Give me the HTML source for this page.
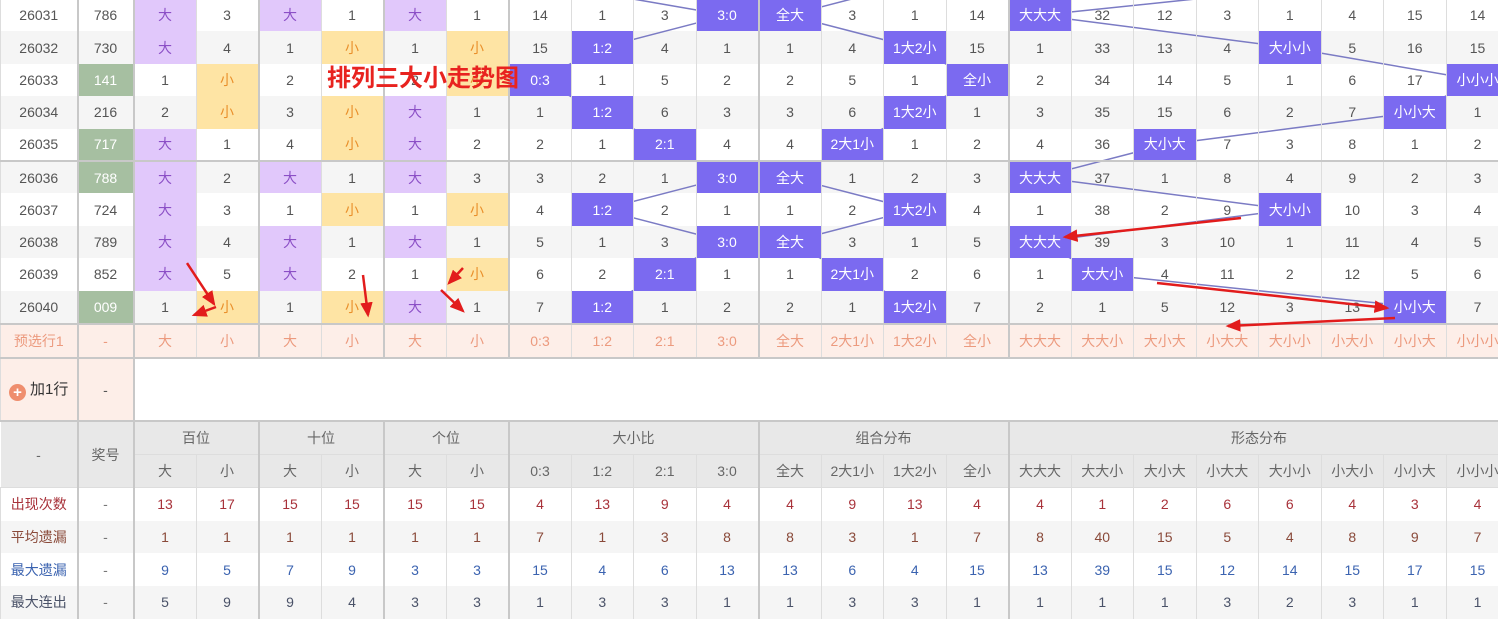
<!DOCTYPE html>
<html><head><meta charset="utf-8">
<style>
body{margin:0;width:1498px;height:621px;overflow:hidden;position:relative;background:#fff;font:14px "Liberation Sans","Noto Sans CJK SC",sans-serif;color:#555}
.zb{position:absolute;left:0;width:1498px;height:32.4px;background:#f5f5f5}
svg{position:absolute;left:0;top:0}
table{position:absolute;left:0;width:1508px;table-layout:fixed;border-collapse:collapse}
td{padding:0;text-align:center;border-left:1px solid #ddd;white-space:nowrap;overflow:hidden}
.D{top:-1px;z-index:2}
.D tr{height:32.4px}
.D td:nth-child(2),.D td:nth-child(3),.D td:nth-child(5),.D td:nth-child(7),.D td:nth-child(9),.D td:nth-child(13),.D td:nth-child(17),
.Y td:nth-child(2),.Y td:nth-child(3),.Y td:nth-child(5),.Y td:nth-child(7),.Y td:nth-child(9),.Y td:nth-child(13),.Y td:nth-child(17),
.S td:nth-child(2),.S td:nth-child(3),.S td:nth-child(5),.S td:nth-child(7),.S td:nth-child(9),.S td:nth-child(13),.S td:nth-child(17){border-left:2px solid #c8c8c8}
.D tr.sep td{border-bottom:2px solid #c8c8c8}
td.b{background:#e1c8fb;color:#8b4fc6}
td.s{background:#fee4a4;color:#e98f2a}
td.p{background:#7b6af0;color:#fff}
td.g{background:#a6bfa1;color:#fff}
.B{top:323px;z-index:2;background:#fff}
.Y td{background:#fdeee8;color:#ec9a7e;height:32px;border-top:2px solid #c8c8c8;border-bottom:2px solid #c8c8c8}
.A td{height:61px}
.A td.pk{background:#fdeee8;color:#555}
.H td{background:#e8e8e8;color:#666;border-left:2px solid #c8c8c8}
.H td.tn{border-left:1px solid #ddd}
.H1 td{height:32px;border-bottom:1px solid #ddd}
.H2 td{height:32px;border-bottom:1px solid #ddd}
.S td{height:32.7px}
.S tr:nth-child(even) td{background:#f5f5f5}
.r1 td{color:#a8323a}.r2 td{color:#8a4a3a}.r3 td{color:#3b63b0}.r4 td{color:#4a5268}
td.dash{color:#777!important}
.title{position:absolute;left:327px;top:63px;z-index:3;font:bold 24px "Liberation Sans","Noto Sans CJK SC",sans-serif;color:#e8231f;line-height:32px}
.plus{display:inline-block;width:17px;height:17px;border-radius:50%;background:#ef8e6e;color:#fff;font:bold 15px/17px "Liberation Sans",sans-serif;text-align:center;vertical-align:-3px;margin-right:4px}
</style></head><body>
<div class="zb" style="top:31.4px"></div>
<div class="zb" style="top:96.2px"></div>
<div class="zb" style="top:161px"></div>
<div class="zb" style="top:225.8px"></div>
<div class="zb" style="top:290.6px"></div>

<svg width="1498" height="330" style="z-index:1" fill="none" stroke="#7b7bc4" stroke-width="1.5">
<polyline points="539.25,-17.2 726.75,15.2 601.75,47.6 539.25,80 601.75,112.4 664.25,144.8 726.75,177.2 601.75,209.6 726.75,242 664.25,274.4 601.75,306.8"/>
<polyline points="914.25,-17.2 789.25,15.2 914.25,47.6 976.75,80 914.25,112.4 851.75,144.8 789.25,177.2 914.25,209.6 789.25,242 851.75,274.4 914.25,306.8"/>
<polyline points="1351.75,-17.2 1039.25,15.2 1289.25,47.6 1476.75,80 1414.25,112.4 1164.25,144.8 1039.25,177.2 1289.25,209.6 1039.25,242 1101.75,274.4 1414.25,306.8"/>
</svg>

<table class="D">
<colgroup><col style="width:77px"><col style="width:56px"><col span="22" style="width:62.5px"></colgroup>
<tr><td>26031</td><td>786</td><td class="b">大</td><td>3</td><td class="b">大</td><td>1</td><td class="b">大</td><td>1</td><td>14</td><td>1</td><td>3</td><td class="p">3:0</td><td class="p">全大</td><td>3</td><td>1</td><td>14</td><td class="p">大大大</td><td>32</td><td>12</td><td>3</td><td>1</td><td>4</td><td>15</td><td>14</td></tr>
<tr><td>26032</td><td>730</td><td class="b">大</td><td>4</td><td>1</td><td class="s">小</td><td>1</td><td class="s">小</td><td>15</td><td class="p">1:2</td><td>4</td><td>1</td><td>1</td><td>4</td><td class="p">1大2小</td><td>15</td><td>1</td><td>33</td><td>13</td><td>4</td><td class="p">大小小</td><td>5</td><td>16</td><td>15</td></tr>
<tr><td>26033</td><td class="g">141</td><td>1</td><td class="s">小</td><td>2</td><td></td><td>2</td><td class="s">小</td><td class="p">0:3</td><td>1</td><td>5</td><td>2</td><td>2</td><td>5</td><td>1</td><td class="p">全小</td><td>2</td><td>34</td><td>14</td><td>5</td><td>1</td><td>6</td><td>17</td><td class="p">小小小</td></tr>
<tr><td>26034</td><td>216</td><td>2</td><td class="s">小</td><td>3</td><td class="s">小</td><td class="b">大</td><td>1</td><td>1</td><td class="p">1:2</td><td>6</td><td>3</td><td>3</td><td>6</td><td class="p">1大2小</td><td>1</td><td>3</td><td>35</td><td>15</td><td>6</td><td>2</td><td>7</td><td class="p">小小大</td><td>1</td></tr>
<tr class="sep"><td>26035</td><td class="g">717</td><td class="b">大</td><td>1</td><td>4</td><td class="s">小</td><td class="b">大</td><td>2</td><td>2</td><td>1</td><td class="p">2:1</td><td>4</td><td>4</td><td class="p">2大1小</td><td>1</td><td>2</td><td>4</td><td>36</td><td class="p">大小大</td><td>7</td><td>3</td><td>8</td><td>1</td><td>2</td></tr>
<tr><td>26036</td><td class="g">788</td><td class="b">大</td><td>2</td><td class="b">大</td><td>1</td><td class="b">大</td><td>3</td><td>3</td><td>2</td><td>1</td><td class="p">3:0</td><td class="p">全大</td><td>1</td><td>2</td><td>3</td><td class="p">大大大</td><td>37</td><td>1</td><td>8</td><td>4</td><td>9</td><td>2</td><td>3</td></tr>
<tr><td>26037</td><td>724</td><td class="b">大</td><td>3</td><td>1</td><td class="s">小</td><td>1</td><td class="s">小</td><td>4</td><td class="p">1:2</td><td>2</td><td>1</td><td>1</td><td>2</td><td class="p">1大2小</td><td>4</td><td>1</td><td>38</td><td>2</td><td>9</td><td class="p">大小小</td><td>10</td><td>3</td><td>4</td></tr>
<tr><td>26038</td><td>789</td><td class="b">大</td><td>4</td><td class="b">大</td><td>1</td><td class="b">大</td><td>1</td><td>5</td><td>1</td><td>3</td><td class="p">3:0</td><td class="p">全大</td><td>3</td><td>1</td><td>5</td><td class="p">大大大</td><td>39</td><td>3</td><td>10</td><td>1</td><td>11</td><td>4</td><td>5</td></tr>
<tr><td>26039</td><td>852</td><td class="b">大</td><td>5</td><td class="b">大</td><td>2</td><td>1</td><td class="s">小</td><td>6</td><td>2</td><td class="p">2:1</td><td>1</td><td>1</td><td class="p">2大1小</td><td>2</td><td>6</td><td>1</td><td class="p">大大小</td><td>4</td><td>11</td><td>2</td><td>12</td><td>5</td><td>6</td></tr>
<tr><td>26040</td><td class="g">009</td><td>1</td><td class="s">小</td><td>1</td><td class="s">小</td><td class="b">大</td><td>1</td><td>7</td><td class="p">1:2</td><td>1</td><td>2</td><td>2</td><td>1</td><td class="p">1大2小</td><td>7</td><td>2</td><td>1</td><td>5</td><td>12</td><td>3</td><td>13</td><td class="p">小小大</td><td>7</td></tr>
</table>

<div class="title">排列三大小走势图</div>

<table class="B">
<colgroup><col style="width:77px"><col style="width:56px"><col span="22" style="width:62.5px"></colgroup>
<tbody class="Y"><tr><td>预选行1</td><td>-</td><td>大</td><td>小</td><td>大</td><td>小</td><td>大</td><td>小</td><td>0:3</td><td>1:2</td><td>2:1</td><td>3:0</td><td>全大</td><td>2大1小</td><td>1大2小</td><td>全小</td><td>大大大</td><td>大大小</td><td>大小大</td><td>小大大</td><td>大小小</td><td>小大小</td><td>小小大</td><td>小小小</td></tr></tbody>
<tbody class="A"><tr><td class="pk" style="text-align:left;padding-left:8px;color:#333;font-size:15px"><span class="plus">+</span>加1行</td><td class="pk" style="border-left:2px solid #c8c8c8">-</td><td colspan="22" style="border-left:2px solid #c8c8c8"></td></tr></tbody>
<tbody class="H">
<tr class="H1"><td rowspan="2" style="border-left:0;border-top:2px solid #c8c8c8">-</td><td rowspan="2" style="border-top:2px solid #c8c8c8">奖号</td><td colspan="2" style="border-top:2px solid #c8c8c8">百位</td><td colspan="2" style="border-top:2px solid #c8c8c8">十位</td><td colspan="2" style="border-top:2px solid #c8c8c8">个位</td><td colspan="4" style="border-top:2px solid #c8c8c8">大小比</td><td colspan="4" style="border-top:2px solid #c8c8c8">组合分布</td><td colspan="8" style="border-top:2px solid #c8c8c8">形态分布</td></tr>
<tr class="H2"><td>大</td><td class="tn">小</td><td>大</td><td class="tn">小</td><td>大</td><td class="tn">小</td><td>0:3</td><td class="tn">1:2</td><td class="tn">2:1</td><td class="tn">3:0</td><td>全大</td><td class="tn">2大1小</td><td class="tn">1大2小</td><td class="tn">全小</td><td>大大大</td><td class="tn">大大小</td><td class="tn">大小大</td><td class="tn">小大大</td><td class="tn">大小小</td><td class="tn">小大小</td><td class="tn">小小大</td><td class="tn">小小小</td></tr>
</tbody>
<tbody class="S">
<tr class="r1"><td>出现次数</td><td class="dash">-</td><td>13</td><td>17</td><td>15</td><td>15</td><td>15</td><td>15</td><td>4</td><td>13</td><td>9</td><td>4</td><td>4</td><td>9</td><td>13</td><td>4</td><td>4</td><td>1</td><td>2</td><td>6</td><td>6</td><td>4</td><td>3</td><td>4</td></tr>
<tr class="r2"><td>平均遗漏</td><td class="dash">-</td><td>1</td><td>1</td><td>1</td><td>1</td><td>1</td><td>1</td><td>7</td><td>1</td><td>3</td><td>8</td><td>8</td><td>3</td><td>1</td><td>7</td><td>8</td><td>40</td><td>15</td><td>5</td><td>4</td><td>8</td><td>9</td><td>7</td></tr>
<tr class="r3"><td>最大遗漏</td><td class="dash">-</td><td>9</td><td>5</td><td>7</td><td>9</td><td>3</td><td>3</td><td>15</td><td>4</td><td>6</td><td>13</td><td>13</td><td>6</td><td>4</td><td>15</td><td>13</td><td>39</td><td>15</td><td>12</td><td>14</td><td>15</td><td>17</td><td>15</td></tr>
<tr class="r4"><td>最大连出</td><td class="dash">-</td><td>5</td><td>9</td><td>9</td><td>4</td><td>3</td><td>3</td><td>1</td><td>3</td><td>3</td><td>1</td><td>1</td><td>3</td><td>3</td><td>1</td><td>1</td><td>1</td><td>1</td><td>3</td><td>2</td><td>3</td><td>1</td><td>1</td></tr>
</tbody>
</table>

<svg width="1498" height="621" style="z-index:4" fill="none" stroke="#e21c1c" stroke-width="2.5">
<defs><marker id="ah" markerWidth="6" markerHeight="5" refX="5" refY="2.5" orient="auto" markerUnits="strokeWidth"><path d="M0,0 L6,2.5 L0,5 Z" fill="#e21c1c" stroke="none"/></marker></defs>
<line x1="187" y1="263" x2="214" y2="304" marker-end="url(#ah)"/>
<line x1="216" y1="307" x2="194" y2="315" marker-end="url(#ah)"/>
<line x1="363" y1="275" x2="368" y2="315" marker-end="url(#ah)"/>
<line x1="463" y1="268" x2="449" y2="283" marker-end="url(#ah)"/>
<line x1="441" y1="290" x2="463" y2="311" marker-end="url(#ah)"/>
<line x1="1241" y1="218" x2="1065" y2="237" marker-end="url(#ah)"/>
<line x1="1157" y1="283" x2="1387" y2="308" marker-end="url(#ah)"/>
<line x1="1395" y1="318" x2="1228" y2="326" marker-end="url(#ah)"/>
</svg>
</body></html>
